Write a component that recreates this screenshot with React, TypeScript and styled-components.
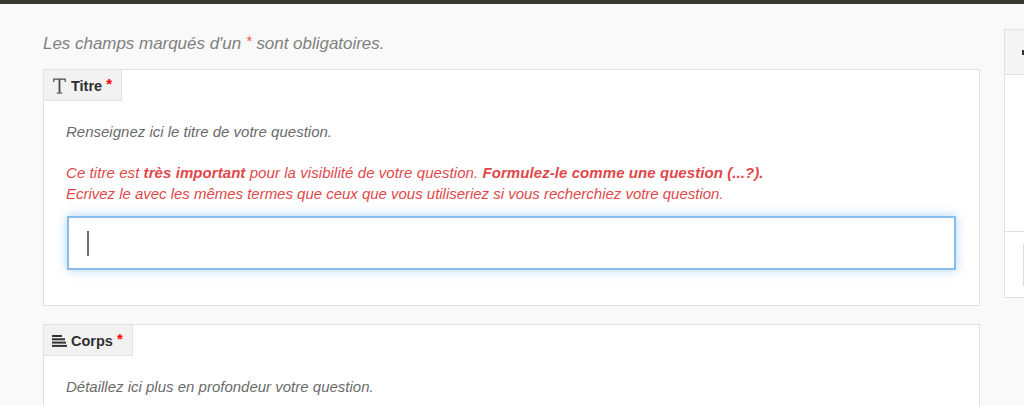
import React from "react";
import styled, { createGlobalStyle } from "styled-components";

const GlobalStyle = createGlobalStyle`
  html, body {
    margin: 0;
    height: 100%;
    overflow: hidden;
    background: #f9f9f9;
    font-family: "Liberation Sans", Arial, sans-serif;
  }
`;

const TopBar = styled.div`
  height: 4px;
  background: #3b3733;
`;

const Page = styled.div`
  display: flex;
  align-items: flex-start;
  gap: 24px;
  padding: 25px 0 0 43px;
  width: 1200px;
`;

const Main = styled.div`
  width: 937px;
  flex: none;
`;

const Notice = styled.p`
  margin: 0;
  height: 40px;
  padding-top: 5px;
  box-sizing: border-box;
  font-size: 16.95px;
  line-height: 20px;
  font-style: italic;
  color: #808080;
`;

const Star = styled.sup`
  color: #f0564f;
  font-size: 15px;
  line-height: 0;
  vertical-align: 3px;
`;

const Card = styled.section`
  background: #fff;
  border: 1px solid #e1e1e1;
  margin-bottom: 18px;
`;

const Tab = styled.div`
  display: inline-flex;
  align-items: center;
  gap: 5px;
  height: 31px;
  padding: 1px 9px 0;
  box-sizing: border-box;
  background: #f2f2f2;
  border-right: 1px solid #e1e1e1;
  border-bottom: 1px solid #e1e1e1;
  font-size: 14.5px;
  font-weight: bold;
  color: #2f2f2f;
  vertical-align: top;
`;

const TabStar = styled.span`
  color: #f00;
  font-size: 15px;
  line-height: 1;
  margin: -5px 0 0 -1px;
`;

const BodyIconSlot = styled.span`
  display: flex;
  margin: 0 -1px;
`;

const CardBody = styled.div`
  padding: 21px 23px 35px 22px;
`;

const Hint = styled.p`
  margin: 0;
  font-size: 15px;
  line-height: 20px;
  font-style: italic;
  color: #6a6a6a;
`;

const Warning = styled(Hint)`
  margin-top: 20px;
  line-height: 21px;
  letter-spacing: -0.02px;
  color: #e0484b;

  &::first-line {
    letter-spacing: 0.07px;
  }
`;

const TitleField = styled.div`
  margin: 12px 0 0 1px;
  height: 54px;
  box-sizing: border-box;
  display: flex;
  align-items: center;
  padding-left: 18px;
  background: #fff;
  border: 2px solid #86bdea;
  box-shadow: 0 0 10px rgba(122, 182, 232, 0.6);
`;

const Caret = styled.span`
  display: block;
  width: 2px;
  height: 25px;
  background: #6e6e6e;
`;

const Side = styled.aside`
  width: 200px;
  height: 269px;
  flex: none;
  box-sizing: border-box;
  background: #fff;
  border: 1px solid #e1e1e1;
`;

const SideHeader = styled.div`
  height: 45px;
  box-sizing: border-box;
  padding: 20px 0 0 17px;
  background: #f4f4f4;
  border-bottom: 1px solid #e1e1e1;
`;

const SideDot = styled.span`
  display: block;
  width: 3px;
  height: 5px;
  background: #333;
`;

const SideContent = styled.div`
  height: 157px;
  box-sizing: border-box;
  border-bottom: 1px solid #e1e1e1;
`;

const SideFooter = styled.div`
  padding: 12px 0 0 18px;
`;

const SideThumb = styled.div`
  width: 40px;
  height: 42px;
  background: #f0d9c9;
`;

const TitleIcon = () => (
  <svg width="13" height="16" viewBox="0 0 13 16" fill="none" stroke="#4a4a4a">
    <path d="M0.8 4V1.2H12.2V4" strokeWidth="1.2" />
    <path d="M6.5 1.2V14.5" strokeWidth="1.8" />
    <path d="M3.8 15H9.2" strokeWidth="1.2" />
  </svg>
);

const BodyIcon = () => (
  <svg width="15" height="12" viewBox="0 0 15 12" fill="#333">
    <rect x="0" y="0" width="10" height="2" />
    <rect x="0" y="3.3" width="13" height="2" />
    <rect x="0" y="6.6" width="14" height="2" />
    <rect x="0" y="9.9" width="15" height="2" />
  </svg>
);

export default function App() {
  return (
    <>
      <GlobalStyle />
      <TopBar />
      <Page>
        <Main>
          <Notice>
            Les champs marqués d'un <Star>*</Star> sont obligatoires.
          </Notice>
          <Card>
            <Tab>
              <TitleIcon />
              Titre
              <TabStar>*</TabStar>
            </Tab>
            <CardBody>
              <Hint>Renseignez ici le titre de votre question.</Hint>
              <Warning>
                Ce titre est <b>très important</b> pour la visibilité de votre question.{" "}
                <b>Formulez-le comme une question (...?).</b>
                <br />
                Ecrivez le avec les mêmes termes que ceux que vous utiliseriez si vous recherchiez votre question.
              </Warning>
              <TitleField>
                <Caret />
              </TitleField>
            </CardBody>
          </Card>
          <Card>
            <Tab>
              <BodyIconSlot>
                <BodyIcon />
              </BodyIconSlot>
              Corps
              <TabStar>*</TabStar>
            </Tab>
            <CardBody>
              <Hint>Détaillez ici plus en profondeur votre question.</Hint>
            </CardBody>
          </Card>
        </Main>
        <Side>
          <SideHeader>
            <SideDot />
          </SideHeader>
          <SideContent />
          <SideFooter>
            <SideThumb />
          </SideFooter>
        </Side>
      </Page>
    </>
  );
}
